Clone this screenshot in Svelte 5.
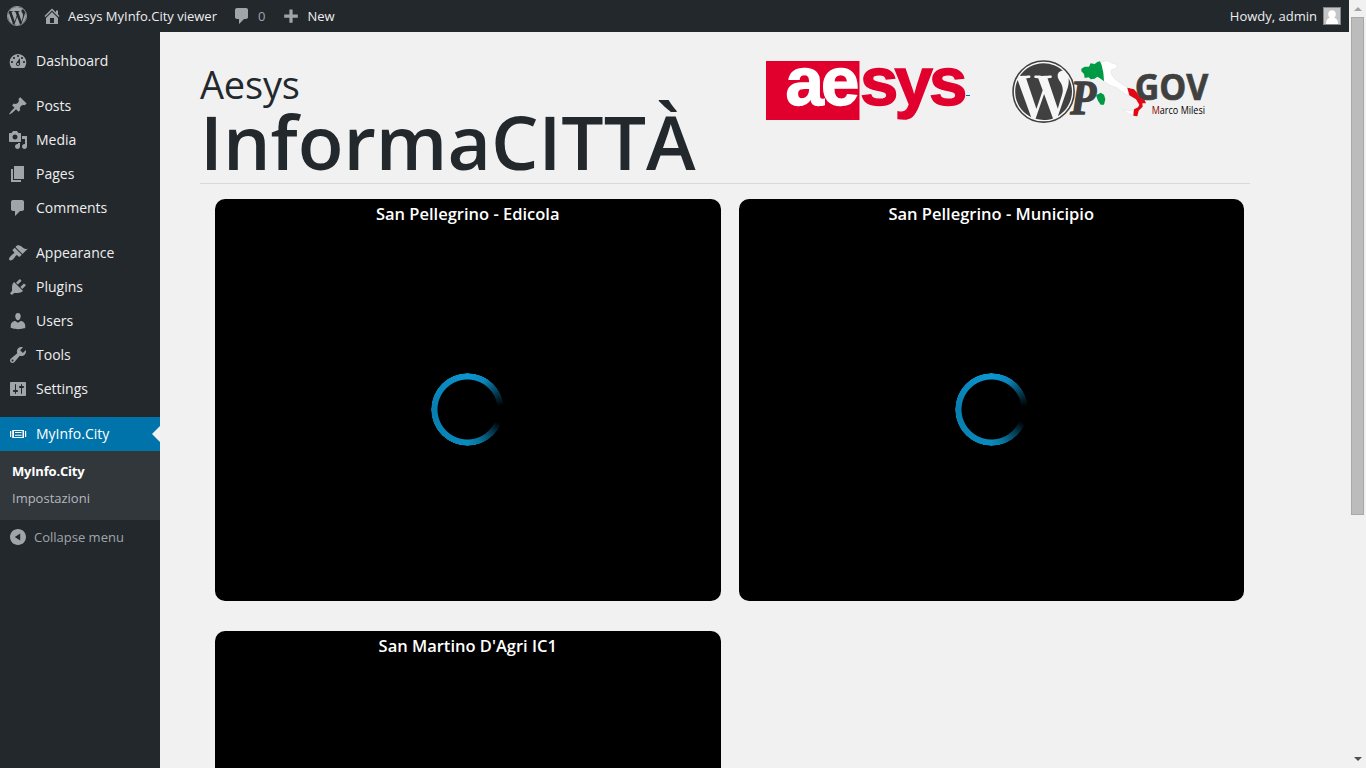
<script>
  const wpMark = 'M21.469 6.825c.84 1.537 1.318 3.3 1.318 5.175 0 3.979-2.156 7.456-5.363 9.325l3.295-9.527c.615-1.54.82-2.771.82-3.864 0-.405-.026-.78-.07-1.11m-7.981.105c.647-.03 1.232-.105 1.232-.105.582-.075.514-.93-.067-.899 0 0-1.755.135-2.88.135-1.064 0-2.85-.15-2.85-.15-.585-.03-.661.855-.075.885 0 0 .54.061 1.125.09l1.68 4.605-2.37 7.08L5.354 6.9c.649-.03 1.234-.1 1.234-.1.585-.075.516-.93-.065-.896 0 0-1.746.138-2.874.138-.2 0-.438-.008-.69-.015C4.911 3.15 8.235 1.215 12 1.215c2.809 0 5.365 1.072 7.286 2.833-.046-.003-.091-.009-.141-.009-1.06 0-1.812.923-1.812 1.914 0 .89.513 1.643 1.06 2.531.411.72.89 1.643.89 2.977 0 .915-.354 1.994-.821 3.479l-1.075 3.585-3.9-11.61zM12 22.784c-1.059 0-2.081-.153-3.048-.437l3.237-9.406 3.315 9.087c.024.053.05.101.078.149-1.12.393-2.325.609-3.582.609M1.211 12c0-1.564.336-3.05.935-4.39L7.29 21.709C3.694 19.96 1.212 16.271 1.211 12';

  const comment = 'M5 2h9c1.1 0 2 .9 2 2v7c0 1.1-.9 2-2 2h-2l-5 5v-5H5c-1.1 0-2-.9-2-2V4c0-1.1.9-2 2-2z';
  const home = 'M16 8.5l1.53 1.53-1.06 1.06L10 4.6l-6.47 6.49-1.06-1.06L10 2.5l4 4v-2h2v4zm-6-2.46l6 5.99V18H4v-5.97zM12 17v-5H8v5h4z';

  const groups = [
    [{ label: 'Dashboard', d: 'M3.76 17h12.48c1.34-1.59 2.04-3.59 2.04-5.67 0-4.6-3.71-8.33-8.28-8.33S1.72 6.73 1.72 11.33c0 2.08.7 4.08 2.04 5.67zM10 4c.55 0 1 .45 1 1s-.45 1-1 1-1-.45-1-1 .45-1 1-1zM6 6c.55 0 1 .45 1 1s-.45 1-1 1-1-.45-1-1 .45-1 1-1zm8 0c.55 0 1 .45 1 1s-.45 1-1 1-1-.45-1-1 .45-1 1-1zm-5.37 5.55L12 7v6c0 1.1-.9 2-2 2s-2-.9-2-2c0-.57.24-1.08.63-1.45zM4 10c.55 0 1 .45 1 1s-.45 1-1 1-1-.45-1-1 .45-1 1-1zm12 0c.55 0 1 .45 1 1s-.45 1-1 1-1-.45-1-1 .45-1 1-1zm-5 3c0-.55-.45-1-1-1s-1 .45-1 1 .45 1 1 1 1-.45 1-1z' }],
    [
      { label: 'Posts', d: 'M10.44 3.02l1.82-1.82 6.36 6.35-1.83 1.82c-1.05-.68-2.48-.57-3.41.36l-.75.75c-.92.93-1.04 2.35-.35 3.41l-1.83 1.82-2.41-2.41-2.8 2.79c-.42.42-3.38 2.71-3.8 2.29s1.86-3.39 2.28-3.81l2.79-2.79L4.1 9.36l1.83-1.82c1.05.69 2.48.57 3.4-.36l.75-.75c.93-.92 1.05-2.35.36-3.41z' },
      { label: 'Media', d: 'M13 11V4c0-.55-.45-1-1-1h-1.67L9 1H5L3.67 3H2c-.55 0-1 .45-1 1v7c0 .55.45 1 1 1h10c.55 0 1-.45 1-1zM7 4.5c1.38 0 2.5 1.12 2.5 2.5S8.38 9.5 7 9.5 4.5 8.38 4.5 7 5.62 4.5 7 4.5zM14 6h5v10.5c0 1.38-1.12 2.5-2.5 2.5S14 17.88 14 16.5s1.12-2.5 2.5-2.5c.17 0 .34.02.5.05V9h-3V6zm-4 8.05V13h2v3.5c0 1.38-1.12 2.5-2.5 2.5S7 17.88 7 16.5 8.12 14 9.5 14c.17 0 .34.02.5.05z' },
      { label: 'Pages', d: 'M6 15V2h10v13H6zm-1 1h8v2H3V5h2v11z' },
      { label: 'Comments', d: comment }
    ],
    [
      { label: 'Appearance', d: 'M14.48 11.06L7.41 3.99l1.5-1.5c.5-.56 2.3-.47 3.51.32 1.21.8 1.43 1.28 2.91 2.1 1.18.64 2.45 1.26 4.45.85zm-.71.71L6.7 4.7 4.93 6.47c-.39.39-.39 1.02 0 1.41l1.06 1.06c.39.39.39 1.03 0 1.42-.6.6-1.43 1.11-2.21 1.69-.35.26-.7.53-1.01.84C1.43 14.23.4 16.08 1.4 17.07c.99 1 2.84-.03 4.18-1.36.31-.31.58-.66.85-1.02.57-.78 1.08-1.61 1.69-2.21.39-.39 1.02-.39 1.41 0l1.06 1.06c.39.39 1.02.39 1.41 0z' },
      { label: 'Plugins', d: 'M13.11 4.36L9.87 7.6 8 5.73l3.24-3.24c.35-.34 1.05-.2 1.56.32.52.51.66 1.21.31 1.55zm-8 1.77l.91-1.12 9.01 9.01-1.19.84c-.71.71-2.63 1.16-3.82 1.16H6.14L4.9 17.26c-.59.59-1.54.59-2.12 0-.59-.58-.59-1.53 0-2.12l1.24-1.24v-3.88c0-1.13.4-3.19 1.09-3.89zm7.26 3.97l3.24-3.24c.34-.35 1.04-.21 1.55.31.52.51.66 1.21.31 1.55l-3.24 3.25z' },
      { label: 'Users', d: 'M10 9.25c-2.27 0-2.73-3.44-2.73-3.44C7 4.02 7.82 2 9.97 2c2.16 0 2.98 2.02 2.71 3.81 0 0-.41 3.44-2.68 3.44zm0 2.57L12.72 10c2.39 0 4.52 2.33 4.52 4.53v2.49s-3.65 1.13-7.24 1.13c-3.65 0-7.24-1.13-7.24-1.13v-2.49c0-2.25 1.94-4.48 4.47-4.48z' },
      { label: 'Tools', d: 'M16.68 9.77c-1.34 1.34-3.3 1.67-4.95.99l-5.41 6.52c-.99.99-2.59.99-3.58 0s-.99-2.59 0-3.57l6.52-5.42c-.68-1.65-.35-3.61.99-4.95 1.28-1.28 3.12-1.62 4.72-1.06l-2.89 2.89 2.82 2.82 2.86-2.87c.53 1.58.18 3.39-1.08 4.65zM3.81 16.21c.4.39 1.04.39 1.43 0 .4-.4.4-1.04 0-1.43-.39-.4-1.03-.4-1.43 0-.39.39-.39 1.03 0 1.43z' },
      { label: 'Settings', d: 'M18 16V4c0-.55-.45-1-1-1H3c-.55 0-1 .45-1 1v12c0 .55.45 1 1 1h14c.55 0 1-.45 1-1zM8 11h1c.55 0 1 .45 1 1s-.45 1-1 1H8v1.5c0 .28-.22.5-.5.5s-.5-.22-.5-.5V13H6c-.55 0-1-.45-1-1s.45-1 1-1h1V5.5c0-.28.22-.5.5-.5s.5.22.5.5V11zm5-2h-1c-.55 0-1-.45-1-1s.45-1 1-1h1V5.5c0-.28.22-.5.5-.5s.5.22.5.5V7h1c.55 0 1 .45 1 1s-.45 1-1 1h-1v5.5c0 .28-.22.5-.5.5s-.5-.22-.5-.5V9z' }
    ],
    [{ label: 'MyInfo.City', current: true, d: 'M2 7h1.2v6H2zM17 7h1.2v6H17zM4.2 6h11.8v8H4.200zM6 7v6h8.500V7zM7 8h6.500v1H7zM7 10.800h6.500v1H7z' }]
  ];

  const displays = ['San Pellegrino - Edicola', 'San Pellegrino - Municipio', "San Martino D'Agri IC1"];
</script>

{#snippet icon(d)}
  <svg class="icon" viewBox="0 0 20 20"><path fill-rule="evenodd" {d} /></svg>
{/snippet}

<div class="window">
  <div class="page">
    <header class="bar">
      <svg class="wp" viewBox="0 0 24 24"><path d={wpMark} /><circle cx="12" cy="12" r="11.5" /></svg>
      <span class="item site">{@render icon(home)}Aesys MyInfo.City viewer</span>
      <span class="item count">{@render icon(comment)}0</span>
      <span class="item new">{@render icon('M8.400 3.500h3.200v5h5.200v3.200h-5.200v5H8.400v-5H3.200V8.500h5.200z')}New</span>
      <span class="item me">Howdy, admin
        <svg class="avatar" viewBox="0 0 18 18">
          <rect x=".5" y=".5" width="17" height="17" fill="#c5c5c5" stroke="#82878c" />
          <path fill="#fff" d="M9 3.200c2.300 0 3.800 1.600 3.800 3.900 0 1.600-.6 2.900-1.600 3.700 2.500.7 3.800 2.400 3.900 6.200H3c.1-3.800 1.300-5.500 3.800-6.200-1-.8-1.600-2.100-1.600-3.700 0-2.300 1.500-3.900 3.800-3.900z" />
        </svg>
      </span>
    </header>
    <div class="body">
      <nav>
        {#each groups as group}
          <ul>
            {#each group as item}
              <li class:current={item.current}>{@render icon(item.d)}<span>{item.label}</span></li>
            {/each}
          </ul>
        {/each}
        <div class="submenu"><b>MyInfo.City</b><span>Impostazioni</span></div>
        <div class="collapse">{@render icon('M10 2c4.420 0 8 3.580 8 8s-3.580 8-8 8-8-3.580-8-8 3.580-8 8-8zM12.200 6.500L6.800 10l5.400 3.500z')}Collapse menu</div>
      </nav>
      <main>
        <div class="heading">
          <h1><small>Aesys</small>InformaCITTÀ</h1>
          <div class="logos">
            <svg class="aesys" viewBox="0 0 204 62" width="204" height="62">
              <rect width="93.500" height="59" y="1" fill="#e1002d" />
              <text y="45.300" font-size="69"><tspan class="light" x="19.500 55">ae</tspan><tspan class="red" x="94 128.500 163">sys</tspan></text>
              <rect x="200" y="35" width="4" height="1" fill="#0073aa" />
            </svg>
            <svg class="wpgov" viewBox="36 30 594 189" width="198" height="63">
              <g transform="translate(36 30) scale(7.900)">
                <circle cx="12" cy="12" r="11.6" fill="#f6f6f6" stroke="#404040" stroke-width=".6" />
                <path d={wpMark} fill="#404040" />
              </g>
              <text class="p" x="211" y="191" font-size="146" textLength="78" lengthAdjust="spacingAndGlyphs">P</text>
              <g transform="translate(222 18)">
                <path fill="#fff" stroke="#dcdcdc" stroke-width="1.500" d="M80 18l20-4 12 6 18 6-2 10-16 6v12l10 14 18 14 20 12 4 24-14-6-20-16-22-8-18-12zM146 160l14 4 18-2v16l-18-6z" />
                <path fill="#009a44" d="M22 38l10-6h13l5-10 12 2 8-6 8-2 5 12 5 22 2 26-10-8-10-6-8 6-12 2-6-6-12 2-2-12-8-8zM66 118l14-8 10 6 4 14-4 16H80l-8-12z" />
                <path fill="#e30613" d="M160 95l20 5 16 18 16 14 4 10h-11l1 10-12 12-4 17-12-2 2-19 12-6 4-8-10-16-20-12z" />
              </g>
              <text class="gov" x="404" y="151" font-size="107" textLength="221" lengthAdjust="spacingAndGlyphs">GOV</text>
              <text class="name" x="455" y="193" font-size="30" textLength="160" lengthAdjust="spacingAndGlyphs"><tspan fill="#8c0000">M</tspan>arco Milesi</text>
            </svg>
          </div>
        </div>
        <section>
          {#each displays as name}
            <article>
              <h2>{name}</h2>
              <div class="stage"><i class="spinner"></i></div>
            </article>
          {/each}
        </section>
      </main>
    </div>
  </div>
  <aside><i class="up"></i><div class="thumb"></div><i class="down"></i></aside>
</div>

<style>
  :global(body) { overflow: hidden; }
  * { box-sizing: border-box; }
  .window { display: flex; width: 1366px; height: 768px; overflow: hidden; background: #f1f1f1; font-family: "Open Sans", sans-serif; font-size: 14px; }
  .page { flex: 1; min-width: 0; display: flex; flex-direction: column; }
  .icon { width: 20px; height: 20px; flex: none; fill: #a0a5aa; }

  .bar { display: flex; align-items: center; flex: none; height: 32px; padding: 0 8px 0 7px; background: #23282d; color: #eee; font-size: 13px; }
  .item { display: flex; align-items: center; white-space: nowrap; }
  .wp { width: 20px; height: 20px; fill: #a0a5aa; }
  .wp circle { fill: none; stroke: #a0a5aa; stroke-width: 1; }
  .site { margin-left: 15px; gap: 6px; }
  .count { margin-left: 15px; gap: 6px; color: #a0a5aa; }
  .new { margin-left: 16px; gap: 6px; }
  .me { margin-left: auto; gap: 6px; }
  .avatar { width: 18px; height: 18px; }

  .body { flex: 1; display: flex; min-height: 0; }
  nav { width: 160px; flex: none; padding-top: 12px; background: #23282d; color: #eee; }
  ul { list-style: none; margin: 0 0 11px; padding: 0; }
  ul:last-of-type { margin: 0; }
  li { display: flex; align-items: center; gap: 8px; height: 34px; padding-left: 8px; }
  li span { padding-bottom: 2px; }
  .current { position: relative; background: #0073aa; color: #fff; }
  .current .icon { fill: #fff; }
  .current::after { content: ""; position: absolute; right: 0; top: 9px; border: 8px solid transparent; border-left: 0; border-right-color: #f1f1f1; }
  .submenu { display: flex; flex-direction: column; height: 69px; padding: 7px 12px; background: #32373c; font-size: 13px; line-height: 27px; color: #b4b9be; }
  .submenu b { color: #fff; font-weight: 700; letter-spacing: -.2px; }
  .collapse { display: flex; align-items: center; gap: 6px; height: 34px; padding-left: 8px; font-size: 13px; color: #a0a5aa; }

  main { flex: 1; padding: 28px 99px 0 40px; min-width: 0; }
  .heading { display: flex; justify-content: space-between; height: 124px; border-bottom: 1px solid #dadada; }
  h1 { margin: 0; color: #23282d; font-size: 75px; font-weight: 600; line-height: 76px; white-space: nowrap; }
  small { display: block; padding-top: 5px; font-size: 38px; font-weight: 400; line-height: 38px; letter-spacing: -.2px; }
  .logos { display: flex; align-items: flex-start; gap: 42px; padding-right: 40px; }
  .aesys, .wpgov { overflow: visible; }
  .aesys { font-family: "Liberation Sans", Arial, sans-serif; font-weight: 700; stroke-width: 1.4px; }
  .light { fill: #fff; stroke: #fff; }
  .red { fill: #e1002d; stroke: #e1002d; }
  .p { font-family: "Liberation Serif", serif; font-style: italic; font-weight: 700; fill: #404040; stroke: #404040; stroke-width: 4px; }
  .gov { font-family: "Open Sans", sans-serif; font-weight: 700; fill: #404040; stroke: #404040; stroke-width: 2px; }
  .name { font-family: "Open Sans", sans-serif; font-weight: 400; }

  section { display: grid; grid-template-columns: 1fr 1fr; gap: 30px 18px; padding: 15px 6px 0 15px; }
  article { display: flex; flex-direction: column; height: 402px; border-radius: 10px; background: #000; color: #fff; }
  h2 { margin: 0; padding-top: 4px; font-size: 16.5px; font-weight: 600; line-height: 22px; text-align: center; }
  .stage { flex: 1; display: grid; place-items: center; padding-bottom: 7px; }
  .spinner { width: 73px; height: 73px; border-radius: 50%; background: conic-gradient(#0b96d0 0deg, #0a86bb 30deg, #064f6e 52deg, #000 84deg, #000 112deg, #04374e 132deg, #08749f 160deg, #0b8abd 180deg, #087eb0 270deg, #0b96d0 360deg); mask: radial-gradient(circle, transparent 29.5px, #000 30.5px, #000 36px, transparent 36.6px); }

  aside { display: flex; flex-direction: column; align-items: center; width: 17px; background: #f1f1f1; }
  .up, .down { border: 4px solid transparent; border-top: 0; border-bottom-color: #a3a3a3; margin: 7px 0 6px; }
  .thumb { width: 13px; height: 498px; border: 1px solid #a8a8a8; background: #bcbcbc; }
  .down { margin: auto 0 7px; border: 4px solid transparent; border-bottom: 0; border-top-color: #505050; }
</style>
